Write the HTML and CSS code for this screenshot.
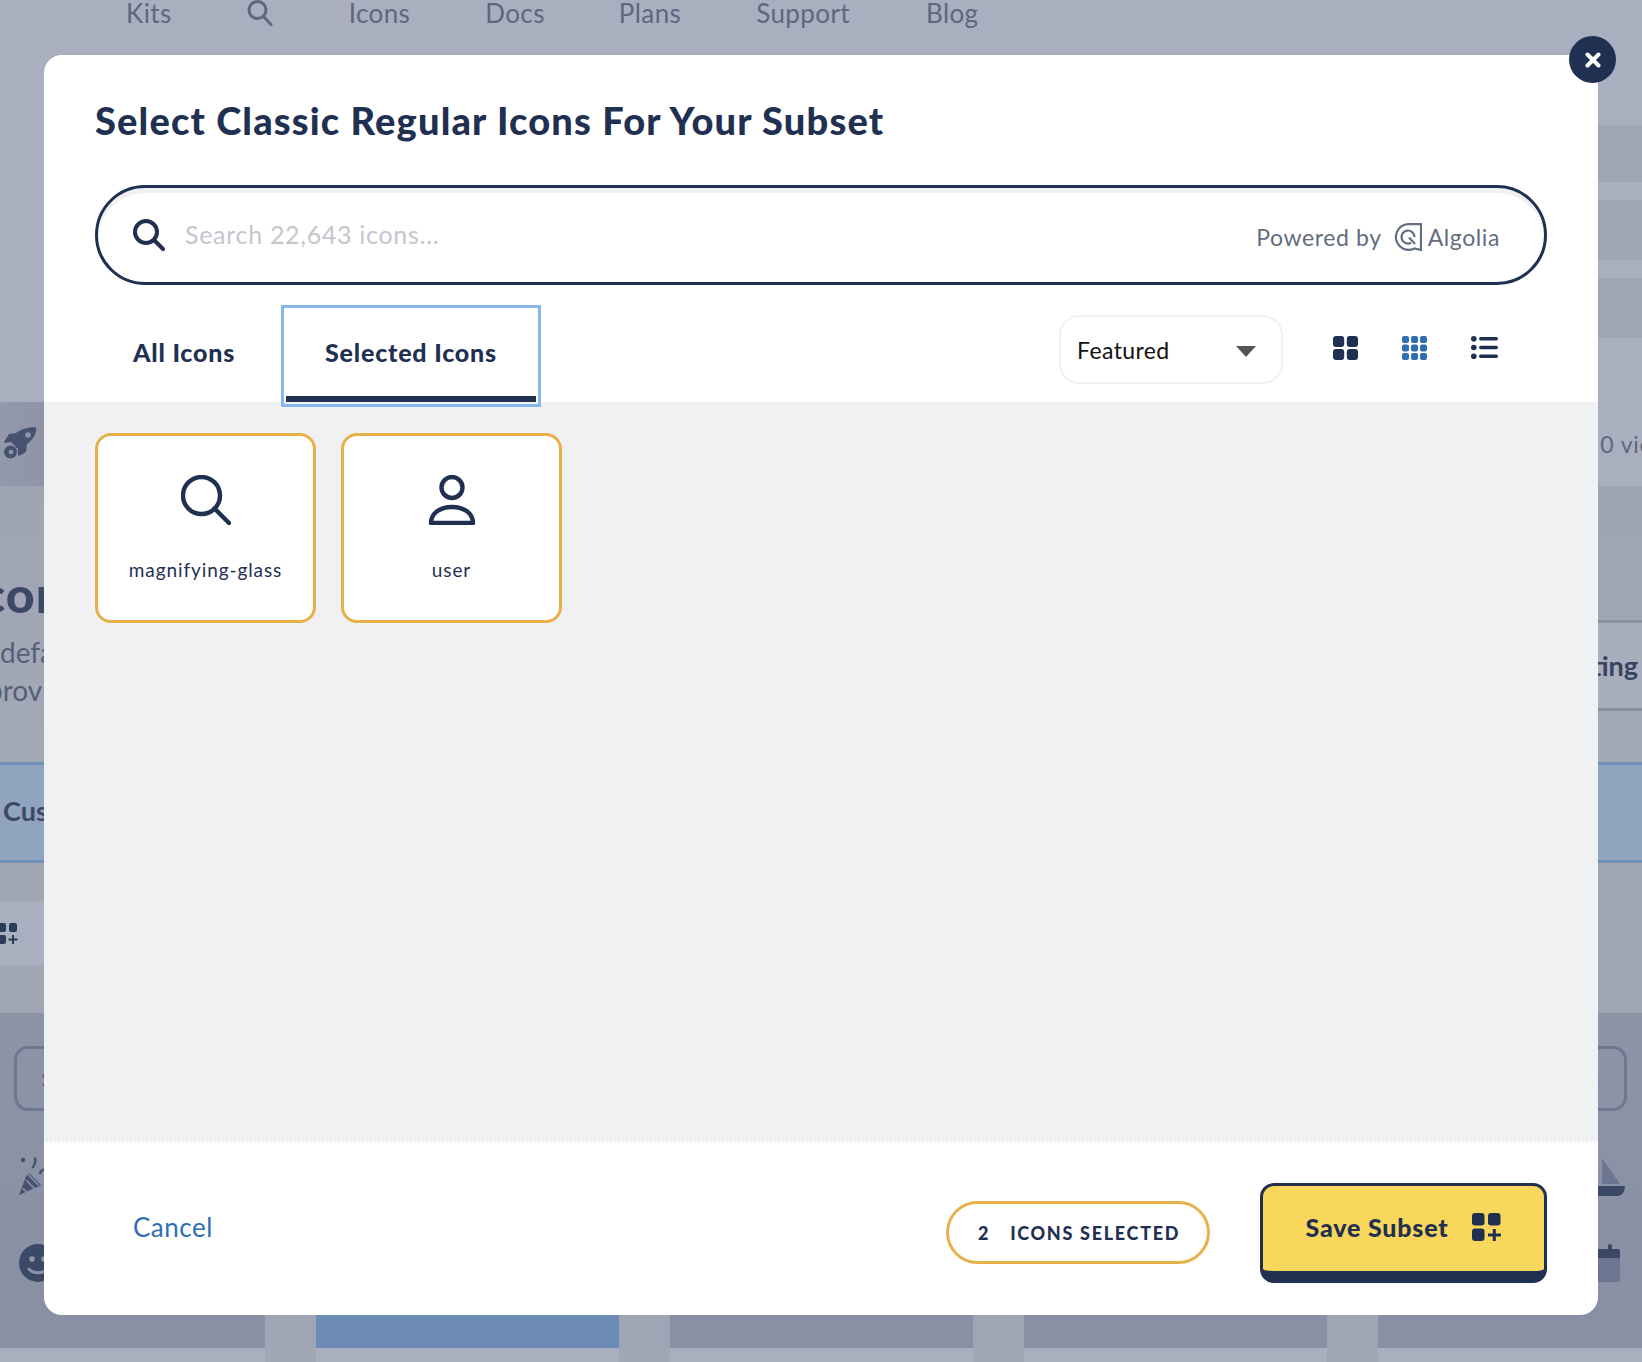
FILE: index.html
```html
<!DOCTYPE html>
<html lang="en">
<head>
<meta charset="utf-8">
<title>Select Classic Regular Icons For Your Subset</title>
<link rel="stylesheet" href="styles.css">
</head>
<body>
<div class="page">
  <nav class="nav">
    <span class="nav-item">Kits</span>
    <svg class="nav-search" viewBox="0 0 26 26"><circle cx="10.5" cy="10" r="8.5"/><path d="M16.5 16.5 24 24.5"/></svg>
    <span class="nav-item">Icons</span>
    <span class="nav-item">Docs</span>
    <span class="nav-item">Plans</span>
    <span class="nav-item">Support</span>
    <span class="nav-item">Blog</span>
  </nav>
  <div class="rail rail-a"></div>
  <div class="rail rail-b"></div>
  <div class="rail rail-c"></div>
  <section class="hero-row">
    <div class="hero-left">
      <svg class="bg-rocket" viewBox="0 0 34 34"><path d="M33 1.500c1 3-1 9-6 14l-3 2.500-1 8-7 4-1-1 0-6-7-7-6 1-1-1 5-8 7-1C18 3 27 .5 33 1.500Z"/><circle cx="25" cy="9" r="2.800" class="hole"/><ellipse cx="7.500" cy="26" rx="6.500" ry="6.500"/><circle cx="8" cy="26" r="2.300" class="hole"/></svg>
    </div>
    <div class="hero-right"><span class="views">0 views</span></div>
  </section>
  <section class="text-row">
    <div class="copy">
      <strong class="copy-title">con</strong>
      <span class="copy-line">defa</span>
      <span class="copy-line line-prov">prov</span>
    </div>
    <div class="tab-side"><strong>ting</strong></div>
  </section>
  <section class="blue-row"><strong class="blue-label">Cus</strong></section>
  <section class="gap-row">
    <div class="mini-bar">
      <svg class="mini-icon" viewBox="0 0 18 21"><rect x="-2" y="0" width="8" height="9" rx="2"/><rect x="9" y="0" width="8" height="9" rx="2"/><rect x="-2" y="12" width="8" height="9" rx="2"/><path d="M13 12v9M8.500 16.500h9" class="plus"/></svg>
    </div>
  </section>
  <section class="dark-row">
    <div class="dark-col">
      <div class="ghost-box ghost-left"><span class="ghost-text">S</span></div>
      <svg class="bg-party" viewBox="0 0 30 40"><path d="M1 38 7 22 8 19 11 16l12 12-3 2-3 1Z"/><path d="M4.500 31 11.500 38M8 23 17 32M9.500 17 21 28.500" class="party-cut"/><circle cx="5" cy="3" r="2.300"/><path d="M17 1.500c1 3 0 6-2 8.500M22 16c1-3 4-4 8-4" class="bg-stroke"/></svg>
      <svg class="bg-smile" viewBox="0 0 38 38"><circle cx="19" cy="19" r="19"/><circle cx="13" cy="15" r="2.800" class="hole"/><circle cx="25" cy="15" r="2.800" class="hole"/><path d="M10 25c4 5 14 5 18 0" class="hole-stroke"/></svg>
    </div>
    <div class="dark-col dark-col-right">
      <div class="ghost-box ghost-right"><span class="ghost-text ghost-text-r">s</span></div>
      <svg class="bg-sail" viewBox="0 0 27 38"><path d="M4 0 22 26H4Z" class="sail"/><path d="M0 28h27c-.5 6-3 10-8 10H0Z"/></svg>
      <svg class="bg-cal" viewBox="0 0 22 38"><path d="M0 5h10V2a2 2 0 0 1 4 0v3h6a2 2 0 0 1 2 2v7H0Z"/><path d="M0 14h22v22a2 2 0 0 1-2 2H0Z" class="sail"/></svg>
    </div>
  </section>
  <div class="foot-strip">
    <span class="seg seg-a"></span><span class="seg seg-b"></span><span class="seg seg-blue"></span><span class="seg seg-b"></span><span class="seg seg-c"></span><span class="seg seg-b"></span><span class="seg seg-c"></span><span class="seg seg-b"></span><span class="seg seg-d"></span>
  </div>
  <div class="foot-strip foot-light">
    <span class="seg seg-a"></span><span class="seg seg-b"></span><span class="seg seg-blue"></span><span class="seg seg-b"></span><span class="seg seg-c"></span><span class="seg seg-b"></span><span class="seg seg-c"></span><span class="seg seg-b"></span><span class="seg seg-d"></span>
  </div>
</div>

<div class="modal">
  <button class="close" aria-label="Close">
    <svg viewBox="0 0 16 16"><path d="M2.500 2.500 13.500 13.500M13.500 2.500 2.500 13.500"/></svg>
  </button>
  <header class="modal-head">
    <h1 class="title">Select Classic Regular Icons For Your Subset</h1>
    <div class="search">
      <svg class="search-icon" viewBox="0 0 32 32"><circle cx="13" cy="13" r="11"/><path d="M21 21 30 30"/></svg>
      <span class="placeholder">Search 22,643 icons...</span>
      <span class="powered">Powered by</span>
      <svg class="algolia" viewBox="0 0 28 28"><path d="M27 1.200H14.500a12.800 12.800 0 1 0 6 24.200L27 27Z"/><path d="M20.500 14a6.500 6.500 0 1 0-3.500 5.800M15 14.500l6 6.500"/></svg>
      <span class="algolia-name">Algolia</span>
    </div>
    <div class="toolbar">
      <div class="tabs">
        <span class="tab">All Icons</span>
        <span class="tab tab-active">Selected Icons</span>
      </div>
      <div class="controls">
        <div class="select"><span>Featured</span><i class="caret"></i></div>
        <div class="views-toggle">
          <svg class="view" viewBox="0 0 25 24"><rect width="11.200" height="11" rx="3"/><rect x="13.800" width="11.200" height="11" rx="3"/><rect y="13" width="11.200" height="11" rx="3"/><rect x="13.800" y="13" width="11.200" height="11" rx="3"/></svg>
          <svg class="view view-on" viewBox="0 0 25 24"><rect width="7" height="7" rx="2"/><rect x="9" width="7" height="7" rx="2"/><rect x="18" width="7" height="7" rx="2"/><rect y="8.500" width="7" height="7" rx="2"/><rect x="9" y="8.500" width="7" height="7" rx="2"/><rect x="18" y="8.500" width="7" height="7" rx="2"/><rect y="17" width="7" height="7" rx="2"/><rect x="9" y="17" width="7" height="7" rx="2"/><rect x="18" y="17" width="7" height="7" rx="2"/></svg>
          <svg class="view view-list" viewBox="0 0 27 23"><circle cx="2.800" cy="2.800" r="2.800"/><circle cx="2.800" cy="11.500" r="2.800"/><circle cx="2.800" cy="20.200" r="2.800"/><rect x="8" y="1" width="19" height="3.400" rx="1.700"/><rect x="8" y="9.800" width="19" height="3.400" rx="1.700"/><rect x="8" y="18.600" width="19" height="3.400" rx="1.700"/></svg>
        </div>
      </div>
    </div>
  </header>
  <main class="results">
    <article class="card">
      <svg class="card-icon" viewBox="0 0 50 50"><circle cx="20.500" cy="20.500" r="18.500"/><path d="M33.500 33.500 48 48"/></svg>
      <span class="card-label">magnifying-glass</span>
    </article>
    <article class="card">
      <svg class="card-icon" viewBox="0 0 50 50"><circle cx="25" cy="12.500" r="10.500"/><path d="M4 48C4 38 13 32 25 32s21 6 21 16Z"/></svg>
      <span class="card-label">user</span>
    </article>
  </main>
  <footer class="modal-foot">
    <a class="cancel">Cancel</a>
    <div class="foot-actions">
      <div class="count"><b>2</b><b>ICONS SELECTED</b></div>
      <button class="save">
        <span>Save Subset</span>
        <svg class="save-icon" viewBox="0 0 29 28"><rect width="12.500" height="12.500" rx="3"/><rect x="16" width="12.500" height="12.500" rx="3"/><rect y="15.500" width="12.500" height="12.500" rx="3"/><path d="M22.300 16v12M16 22h13"/></svg>
      </button>
    </div>
  </footer>
</div>
</body>
</html>
```
FILE: styles.css
```css
* { box-sizing: border-box; }
html, body { margin: 0; padding: 0; height: 1362px; overflow: hidden; }
body { font-family: "Lato", "Open Sans", sans-serif; color: #1f2f50; background: #a9afbe; position: relative; }

/* dimmed page behind the modal */
.page { width: 1642px; height: 1362px; display: flex; flex-direction: column; overflow: hidden; background: #a9afbe; color: #5d6780; }
.nav { height: 125px; flex: none; display: flex; align-items: flex-start; padding-left: 126px; }
.nav-item { font-size: 26px; line-height: 26px; margin-right: 76px; letter-spacing: 0.4px; }
.nav-item:nth-child(3) { margin-right: 75px; }
.nav-item:nth-child(4) { margin-right: 74px; }
.nav-item:nth-child(5) { margin-right: 75px; }
.nav-search { width: 26px; height: 26px; margin: 0 76px 0 -1px; fill: none; stroke: #5d6780; stroke-width: 3; stroke-linecap: round; }
.rail { width: 44px; flex: none; margin-left: auto; background: #9fa5b5; height: 60px; }
.rail-a { height: 57px; margin-bottom: 18px; }
.rail-b { margin-bottom: 18px; }
.rail-c { margin-bottom: 64px; }

.hero-row { height: 84px; flex: none; display: flex; justify-content: space-between; }
.hero-left { width: 60px; background: linear-gradient(90deg, #9398aa, #8d92a6); padding: 24px 0 0 3px; }
.bg-rocket { width: 34px; height: 34px; fill: #46526f; display: block; }
.bg-rocket .hole { fill: #8f95a8; }
.hero-right { width: 60px; display: flex; align-items: center; justify-content: flex-end; background: #a9afbe; overflow: hidden; white-space: nowrap; }
.views { font-size: 23px; color: #5d6780; flex: none; margin-right: -40px; letter-spacing: 0.8px; }

.text-row { height: 276px; flex: none; display: flex; justify-content: space-between; background: linear-gradient(180deg, #9fa4b3, #a3a8b6); }
.copy { display: flex; flex-direction: column; width: 60px; overflow: hidden; white-space: nowrap; padding-top: 84px; }
.copy-title { font-size: 50px; line-height: 48px; font-weight: 900; color: #3b4967; margin-left: -19px; letter-spacing: 1px; }
.copy-line { font-size: 28px; line-height: 38px; margin-top: 15px; color: #566079; }
.line-prov { margin: 0 0 0 -13px; }
.tab-side { width: 44px; height: 91px; margin-top: 134px; border-top: 3px solid #8c91a2; border-bottom: 3px solid #8c91a2; background: #a9aebc; display: flex; align-items: center; justify-content: flex-end; font-size: 27px; color: #364461; overflow: hidden; white-space: nowrap; padding-right: 4px; }

.blue-row { height: 101px; flex: none; background: #91a4bf; border-top: 3px solid #6f90bb; border-bottom: 3px solid #6f90bb; display: flex; align-items: center; padding-left: 3px; }
.blue-label { font-size: 27px; color: #3b4967; margin-bottom: 4px; }
.gap-row { height: 150px; flex: none; background: #a1a6b5; padding-top: 38px; }
.mini-bar { width: 60px; height: 65px; background: #a9afbe; display: flex; align-items: center; }
.mini-icon { width: 18px; height: 21px; fill: #2d3b5a; overflow: hidden; flex: none; }
.mini-icon .plus { fill: none; stroke: #2d3b5a; stroke-width: 2; }

.dark-row { height: 302px; flex: none; display: flex; justify-content: space-between; background: linear-gradient(180deg, #8d94a8, #8a90a4); }
.dark-col { width: 60px; display: flex; flex-direction: column; align-items: flex-start; padding-top: 33px; }
.dark-col-right { width: 44px; overflow: hidden; }
.ghost-box { height: 65px; flex: none; border: 3px solid #6f7790; display: flex; align-items: center; }
.ghost-left { width: 70px; margin-left: 14px; border-radius: 14px; padding-left: 25px; }
.ghost-right { width: 29px; margin-right: 15px; border-left: 0; border-radius: 0 14px 14px 0; }
.ghost-text { font-size: 20px; font-weight: 700; color: #3b4967; }
.ghost-text-r { margin-left: -8px; }
.bg-party { width: 30px; height: 40px; margin: 46px 0 0 18px; fill: #46526f; flex: none; }
.bg-party .party-cut { fill: none; stroke: #8c92a6; stroke-width: 1.6; }
.bg-stroke { fill: none; stroke: #46526f; stroke-width: 2.400; stroke-linecap: round; }
.bg-smile { width: 38px; height: 38px; margin: 47px 0 0 19px; fill: #3b4967; flex: none; }
.bg-smile .hole { fill: #8d94a8; }
.bg-smile .hole-stroke { fill: none; stroke: #8d94a8; stroke-width: 3; stroke-linecap: round; }
.bg-sail { width: 27px; height: 38px; margin: 47px 0 0 0; fill: #3b4967; flex: none; }
.bg-sail .sail { fill: #6c7690; }
.bg-cal { width: 22px; height: 38px; margin: 48px 0 0 0; fill: #3b4967; flex: none; }
.bg-cal .sail { fill: #6c7690; }

.foot-strip { height: 33px; flex: none; display: flex; }
.foot-light { height: 14px; }
.seg { flex: none; height: 100%; background: #8a90a4; }
.seg-a { width: 265px; }
.seg-b { width: 51px; background: #9ea5b4; }
.seg-blue { width: 303px; background: #6c8cb7; }
.seg-c { width: 303px; }
.seg-d { width: 265px; }
.foot-light .seg { background: #a9afbe; }
.foot-light .seg-b { background: #a1a7b5; }

/* modal */
.modal { position: absolute; left: 44px; top: 55px; width: 1554px; height: 1260px; background: #fff; border-radius: 18px; display: flex; flex-direction: column; }
.close { position: absolute; right: -18px; top: -19px; width: 47px; height: 47px; border: 0; padding: 0; border-radius: 50%; background: #1f3051; display: flex; align-items: center; justify-content: center; }
.close svg { width: 16px; height: 16px; fill: none; stroke: #fff; stroke-width: 4; stroke-linecap: round; }
.modal-head { flex: none; height: 347px; padding: 0 51px; display: flex; flex-direction: column; }
.title { margin: 43px 0 0; font-size: 38px; line-height: 45px; font-weight: 900; color: #1f3051; letter-spacing: 1.16px; white-space: nowrap; }
.search { margin-top: 42px; height: 100px; flex: none; border: 3px solid #1f3051; border-radius: 50px; display: flex; align-items: center; padding: 0 44px 0 35px; box-shadow: inset 0 5px 0 #eef0f2; }
.search-icon { width: 32px; height: 32px; flex: none; fill: none; stroke: #1f3051; stroke-width: 4; stroke-linecap: round; }
.placeholder { margin-left: 20px; font-size: 25px; color: #c3c6cc; flex: 1; letter-spacing: 0.7px; margin-bottom: 2px; }
.powered { font-size: 23px; color: #636c80; margin-top: 3px; letter-spacing: 0.6px; }
.algolia { width: 28px; height: 28px; margin-left: 12px; flex: none; fill: none; stroke: #636c80; stroke-width: 2.200; margin-top: 3px; }
.algolia-name { margin: 3px 0 0 6px; font-size: 23px; color: #636c80; letter-spacing: 0.6px; }

.toolbar { flex: 1; display: flex; justify-content: space-between; margin-top: 20px; }
.tabs { display: flex; align-items: flex-start; }
.tab { display: flex; align-items: center; height: 102px; padding: 0 0 8px 38px; font-size: 25px; font-weight: 900; color: #1f3051; letter-spacing: 0.8px; white-space: nowrap; }
.tab:first-child { width: 186px; }
.tab-active { width: 260px; border: 3px solid #85b7ea; justify-content: center; padding: 0 0 8px; position: relative; z-index: 1; }
.tab-active::after { content: ""; position: absolute; left: 2px; right: 2px; bottom: 2px; height: 6px; background: #1f3051; }
.controls { display: flex; align-items: flex-start; padding-top: 10px; }
.select { width: 224px; height: 69px; border: 2px solid #f0f1f3; border-radius: 20px; display: flex; align-items: center; justify-content: space-between; padding: 0 25px 0 16px; font-size: 23px; color: #111; letter-spacing: 0.4px; }
.caret { width: 0; height: 0; border-style: solid; border-width: 11px 10px 0; border-color: #555 transparent transparent; margin-top: 3px; }
.views-toggle { display: flex; margin: 21px 0 0 50px; gap: 44px; padding-right: 49px; }
.view { width: 25px; height: 24px; fill: #1f3051; flex: none; }
.view-on { fill: #2f6db5; }
.view-list { width: 27px; height: 23px; }

.results { flex: 1; background: #eff1f3; padding: 31px 51px; display: flex; align-items: flex-start; gap: 25px; border-bottom: 2px dotted #fff; }
.card { width: 221px; height: 190px; background: #fff; border: 3px solid #e8b04a; border-radius: 16px; display: flex; flex-direction: column; align-items: center; padding-top: 39px; }
.card-icon { width: 50px; height: 50px; fill: none; stroke: #1f3051; stroke-width: 4.400; stroke-linecap: round; stroke-linejoin: round; flex: none; }
.card-label { margin-top: 33px; font-size: 19px; line-height: 24px; color: #1f3051; letter-spacing: 0.9px; }

.modal-foot { flex: none; height: 172px; display: flex; justify-content: space-between; align-items: flex-start; padding: 40px 51px 0 89px; }
.cancel { font-size: 26px; line-height: 30px; color: #2f6db5; margin-top: 29px; letter-spacing: 0.5px; }
.foot-actions { display: flex; align-items: flex-start; gap: 50px; }
.count { width: 264px; height: 63px; margin-top: 18px; border: 3px solid #e8b04a; border-radius: 32px; display: flex; align-items: center; gap: 20px; padding-left: 29px; font-size: 18px; font-weight: 900; letter-spacing: 1.7px; color: #1f3051; }
.save { width: 287px; height: 100px; border: 3px solid #1f3051; border-bottom-width: 12px; border-radius: 14px; background: #f9d65c; display: flex; align-items: center; justify-content: center; gap: 24px; padding: 0 0 4px; font-family: inherit; font-size: 25px; font-weight: 900; letter-spacing: 0.8px; color: #1f3051; }
.save-icon { width: 29px; height: 28px; fill: #1f3051; stroke: none; flex: none; }
.save-icon path { fill: none; stroke: #1f3051; stroke-width: 3; }
```
